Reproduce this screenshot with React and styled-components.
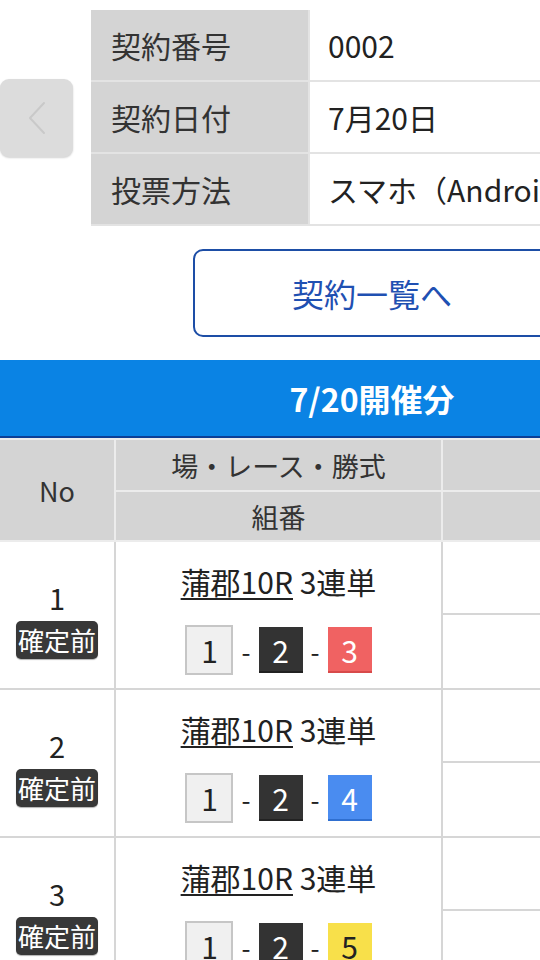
import React from "react";
import styled, { createGlobalStyle } from "styled-components";

const GlobalStyle = createGlobalStyle`
  html, body {
    margin: 0;
    padding: 0;
    background: #ffffff;
  }
  body {
    font-family: "Noto Sans CJK JP", "Noto Sans", sans-serif;
    color: #222;
  }
  * { box-sizing: border-box; }
`;

const Viewport = styled.div`
  width: 540px;
  overflow: hidden;
`;

const Page = styled.div`
  width: 744px;
`;

const TopSection = styled.div`
  display: flex;
  align-items: center;
  gap: 18px;
  padding-top: 10px;
`;

const PrevButton = styled.button`
  flex: none;
  width: 73px;
  height: 78px;
  border: none;
  border-radius: 9px;
  background: #dcdcdc;
  box-shadow: 0 1px 2px rgba(0, 0, 0, 0.18);
  display: flex;
  align-items: center;
  justify-content: center;
  padding: 0;
`;

const InfoGrid = styled.dl`
  margin: 0;
  width: 562px;
  display: grid;
  grid-template-columns: 217px 1fr;
  grid-auto-rows: 70px;
  gap: 2px;
  padding-bottom: 2px;
  background: #e3e3e3;
`;

const InfoLabel = styled.dt`
  background: #d4d4d4;
  color: #333;
  font-size: 30px;
  display: flex;
  align-items: center;
  padding-left: 20px;
`;

const InfoValue = styled.dd`
  margin: 0;
  background: #fff;
  color: #222;
  font-size: 30px;
  display: flex;
  align-items: center;
  padding-left: 18px;
  white-space: nowrap;
  overflow: hidden;
`;

const ListButton = styled.button`
  display: flex;
  align-items: center;
  justify-content: center;
  margin: 23px auto 0;
  width: 358px;
  height: 88px;
  border: 2px solid #1d4ea6;
  border-radius: 10px;
  background: #fff;
  color: #1f50b2;
  font-family: inherit;
  font-size: 32px;
  padding: 0;
`;

const SectionBar = styled.h2`
  margin: 23px 0 0;
  height: 78px;
  background: #0a83e4;
  border-bottom: 2px solid #0c3f96;
  color: #fff;
  font-size: 32px;
  font-weight: 700;
  display: flex;
  align-items: center;
  justify-content: center;
`;

const Grid = styled.div`
  display: grid;
  grid-template-columns: 114px 325px 1fr;
  gap: 2px;
  background: ${(p) => p.$line};
  padding-top: ${(p) => p.$padTop || 0}px;
  padding-bottom: 2px;
  grid-template-rows: ${(p) => p.$rows};
`;

const HeadCell = styled.div`
  background: #d4d4d4;
  color: #333;
  font-size: ${(p) => p.$size || 27}px;
  display: flex;
  align-items: center;
  justify-content: center;
  grid-row: ${(p) => p.$span || "auto"};
`;

const BodyCell = styled.div`
  background: #fff;
  display: flex;
  flex-direction: column;
  align-items: center;
  justify-content: ${(p) => (p.$top ? "flex-start" : "center")};
  padding-top: ${(p) => p.$padTop || 0}px;
  grid-row: ${(p) => p.$span || "auto"};
`;

const RowNo = styled.div`
  font-size: 29px;
  line-height: 40px;
  color: #222;
`;

const Badge = styled.span`
  margin-top: 4px;
  background: #383838;
  color: #fff;
  font-size: 26px;
  line-height: 38px;
  padding: 0 2px;
  border-radius: 5px;
  box-shadow: 0 1px 1px rgba(0, 0, 0, 0.3);
`;

const RaceTitle = styled.div`
  font-size: 30px;
  line-height: 40px;
  color: #222;
`;

const RaceLink = styled.a`
  color: #222;
  text-decoration: underline;
  text-underline-offset: 4px;
  text-decoration-thickness: 2px;
`;

const Combo = styled.div`
  margin-top: 24px;
  display: flex;
  align-items: center;
  gap: 8px;
`;

const Dash = styled.span`
  font-size: 26px;
  color: #222;
`;

const boatColors = {
  1: { bg: "#f0f0f0", fg: "#222", border: "#c6c6c6" },
  2: { bg: "#333333", fg: "#fff", border: "#222" },
  3: { bg: "#f06262", fg: "#fff", border: "#d84a4a" },
  4: { bg: "#4a8cf0", fg: "#fff", border: "#2f6fd0" },
  5: { bg: "#f8e04a", fg: "#222", border: "#e0c430" },
};

const Boat = styled.span`
  width: ${(p) => (p.$n === 1 ? 48 : 44)}px;
  height: ${(p) => (p.$n === 1 ? 50 : 46)}px;
  display: flex;
  align-items: center;
  justify-content: center;
  font-size: 30px;
  background: ${(p) => boatColors[p.$n].bg};
  color: ${(p) => boatColors[p.$n].fg};
  border: ${(p) => (p.$n === 1 ? `2px solid ${boatColors[1].border}` : "none")};
  box-shadow: ${(p) => (p.$n === 1 ? "none" : `inset 0 -2px 0 ${boatColors[p.$n].border}`)};
`;

const rows = [
  { no: 1, combo: [1, 2, 3] },
  { no: 2, combo: [1, 2, 4] },
  { no: 3, combo: [1, 2, 5] },
];

function ChevronLeft() {
  return (
    <svg width="24" height="36" viewBox="0 0 24 36" aria-hidden="true">
      <path d="M19 3 L5 18 L19 33" fill="none" stroke="#c9c9c9" strokeWidth="2" strokeLinecap="round" strokeLinejoin="round" />
    </svg>
  );
}

export default function App() {
  return (
    <Viewport>
      <GlobalStyle />
      <Page>
        <TopSection>
          <PrevButton aria-label="前へ">
            <ChevronLeft />
          </PrevButton>
          <InfoGrid>
            <InfoLabel>契約番号</InfoLabel>
            <InfoValue>0002</InfoValue>
            <InfoLabel>契約日付</InfoLabel>
            <InfoValue>7月20日</InfoValue>
            <InfoLabel>投票方法</InfoLabel>
            <InfoValue>スマホ（Android）</InfoValue>
          </InfoGrid>
        </TopSection>

        <ListButton>契約一覧へ</ListButton>

        <SectionBar>7/20開催分</SectionBar>

        <Grid $line="#ececec" $padTop={2} $rows="50px 48px">
          <HeadCell $span="1 / 3" $size={27}>No</HeadCell>
          <HeadCell>場・レース・勝式</HeadCell>
          <HeadCell />
          <HeadCell>組番</HeadCell>
          <HeadCell />
        </Grid>

        {rows.map((r) => (
          <Grid key={r.no} $line="#d6d6d6" $rows="71px 73px">
            <BodyCell $span="1 / 3" $padTop={6}>
              <RowNo>{r.no}</RowNo>
              <Badge>確定前</Badge>
            </BodyCell>
            <BodyCell $span="1 / 3" $top $padTop={19}>
              <RaceTitle>
                <RaceLink>蒲郡10R</RaceLink> 3連単
              </RaceTitle>
              <Combo>
                <Boat $n={r.combo[0]}>{r.combo[0]}</Boat>
                <Dash>-</Dash>
                <Boat $n={r.combo[1]}>{r.combo[1]}</Boat>
                <Dash>-</Dash>
                <Boat $n={r.combo[2]}>{r.combo[2]}</Boat>
              </Combo>
            </BodyCell>
            <BodyCell />
            <BodyCell />
          </Grid>
        ))}
      </Page>
    </Viewport>
  );
}
